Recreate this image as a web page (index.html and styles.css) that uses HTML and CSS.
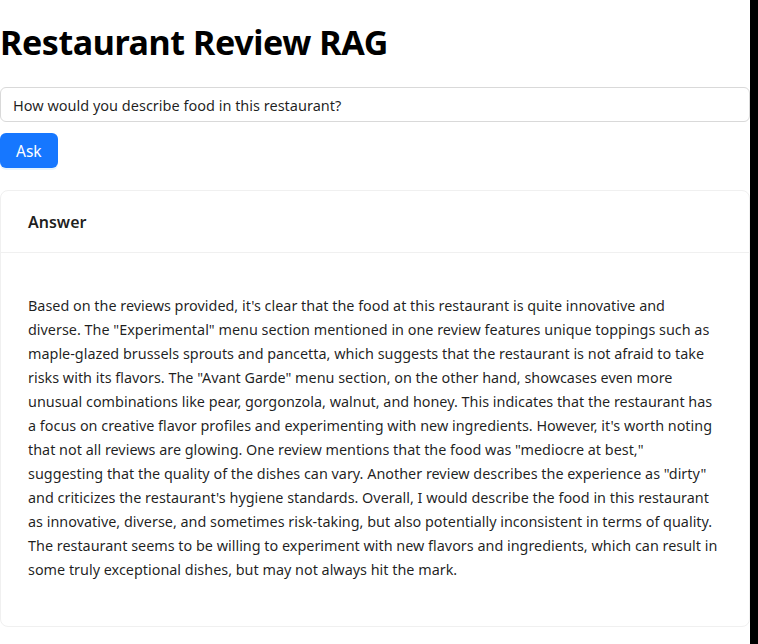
FILE: index.html
```html
<!DOCTYPE html>
<html lang="en">
<head>
<meta charset="utf-8">
<title>Restaurant Review RAG</title>
<link rel="stylesheet" href="styles.css">
</head>
<body>
<main class="app">
  <h1 class="title">Restaurant Review RAG</h1>
  <input class="query" type="text" value="How would you describe food in this restaurant?">
  <button class="ask" type="button">Ask</button>
  <section class="card">
    <div class="card-head">Answer</div>
    <div class="card-body">
      <p class="answer">Based on the reviews provided, it's clear that the food at this restaurant is quite innovative and diverse. The "Experimental" menu section mentioned in one review features unique toppings such as maple-glazed brussels sprouts and pancetta, which suggests that the restaurant is not afraid to take risks with its flavors. The "Avant Garde" menu section, on the other hand, showcases even more unusual combinations like pear, gorgonzola, walnut, and honey. This indicates that the restaurant has a focus on creative flavor profiles and experimenting with new ingredients. However, it's worth noting that not all reviews are glowing. One review mentions that the food was "mediocre at best," suggesting that the quality of the dishes can vary. Another review describes the experience as "dirty" and criticizes the restaurant's hygiene standards. Overall, I would describe the food in this restaurant as innovative, diverse, and sometimes risk-taking, but also potentially inconsistent in terms of quality. The restaurant seems to be willing to experiment with new flavors and ingredients, which can result in some truly exceptional dishes, but may not always hit the mark.</p>
    </div>
  </section>
</main>
</body>
</html>
```

FILE: styles.css
```css
html {
  background: #000;
}
body {
  margin: 0;
  width: 750px;
  min-height: 644px;
  background: #fff;
  font-family: "Noto Sans", "Open Sans", sans-serif;
  color: rgba(0, 0, 0, 0.88);
}
.app {
  display: flex;
  flex-direction: column;
  align-items: flex-start;
}
.title {
  margin: 20px 0 23px;
  font-size: 34px;
  line-height: 44px;
  font-weight: 700;
  letter-spacing: -0.4px;
  color: #000;
}
.query {
  box-sizing: border-box;
  width: 750px;
  height: 35px;
  margin: 0;
  padding: 0 12px;
  border: 1px solid #d9d9d9;
  border-radius: 6px;
  font-family: inherit;
  font-size: 14.5px;
  color: rgba(0, 0, 0, 0.88);
  background: #fff;
}
.ask {
  margin-top: 11px;
  height: 35px;
  padding: 0 16px;
  border: 0;
  border-radius: 6px;
  background: #1677ff;
  color: #fff;
  font-family: inherit;
  font-size: 15.5px;
  box-shadow: 0 2px 0 rgba(5, 145, 255, 0.1);
}
.card {
  box-sizing: border-box;
  width: 750px;
  margin-top: 22px;
  border: 1px solid #f0f0f0;
  border-radius: 8px;
  background: #fff;
}
.card-head {
  height: 61px;
  padding: 0 27px;
  display: flex;
  align-items: center;
  border-bottom: 1px solid #f0f0f0;
  font-size: 16px;
  font-weight: 600;
}
.card-body {
  padding: 41px 28px 44px 27px;
}
.answer {
  margin: 0;
  font-size: 14.4px;
  line-height: 24px;
}
```
